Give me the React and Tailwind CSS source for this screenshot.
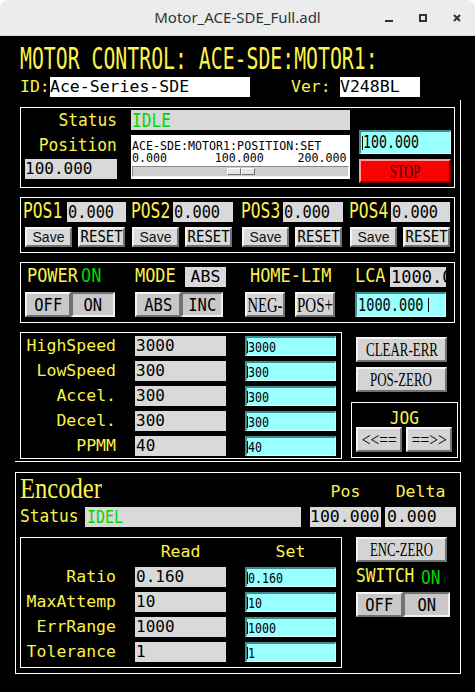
const Y = "text-[#fbf34a]";
const G = "text-[#00d800]";
const RAISED = "border-2 border-t-[#f4f4f4] border-l-[#f4f4f4] border-b-[#727272] border-r-[#727272]";
const SUNK = "border-2 border-t-[#727272] border-l-[#727272] border-b-[#f0f0f0] border-r-[#f0f0f0]";
const SERIF = "font-['Liberation_Serif',serif]";

function N({ c = "", children }) {
  return <span className={`inline-block whitespace-nowrap leading-none ${c}`}>{children}</span>;
}

function Btn({ w, h = "h-[25px]", bg = "bg-[#d4d4d4]", bevel = RAISED, className = "", children }) {
  return (
    <div className={`${w} ${h} ${bg} ${bevel} ${className} shrink-0 flex items-center justify-center overflow-hidden`}>
      {children}
    </div>
  );
}

function Rd({ w, className = "", children }) {
  return (
    <div className={`${w} h-[20px] ${className} shrink-0 bg-[#d9d9d9] flex items-center overflow-hidden`}>
      {children}
    </div>
  );
}

function Ent({ w, h = "h-[20px]", className = "", children }) {
  return (
    <div
      className={`${w} ${h} ${className} shrink-0 bg-[#99ffff] border-t-2 border-l-2 border-b border-r border-t-[#3f8c8c] border-l-[#3f8c8c] border-b-[#d2ffff] border-r-[#d2ffff] flex items-center overflow-hidden`}
    >
      {children}
    </div>
  );
}

const Caret = ({ h = "h-[12px]" }) => <span className={`w-px ${h} bg-black shrink-0`} />;

function ParamRow({ label, value }) {
  return (
    <div className="h-[20px] flex items-center">
      <div className="w-[95px] flex justify-end shrink-0">
        <N c={`text-[16.5px] ${Y}`}>{label}</N>
      </div>
      <Rd w="w-[91px]" className="ml-[19px] pl-[1px]">
        <N c="text-[16px] text-black">{value}</N>
      </Rd>
      <Ent w="w-[91px]" className="ml-[19px]">
        <Caret />
        <N c="text-[14px] scale-x-[0.83] origin-left text-black">{value}</N>
      </Ent>
    </div>
  );
}

function TitleBar() {
  return (
    <div className="h-[36px] shrink-0 bg-[#ececec] rounded-t-[8px] border-b border-[#d2d2d2] grid grid-cols-[1fr_auto_1fr] items-center font-['Noto_Sans',sans-serif]">
      <div />
      <span className="text-[15px] text-[#2e3436]">Motor_ACE-SDE_Full.adl</span>
      <div className="flex justify-end items-center gap-[26px] pr-[14px]">
        <svg width="8" height="8" viewBox="0 0 8 8">
          <rect x="0" y="6" width="8" height="2" fill="#2e3436" />
        </svg>
        <svg width="8" height="8" viewBox="0 0 8 8">
          <rect x="1" y="1" width="6" height="6" fill="none" stroke="#2e3436" strokeWidth="2" />
        </svg>
        <svg width="8" height="8" viewBox="0 0 8 8">
          <path d="M1 1 L7 7 M7 1 L1 7" stroke="#2e3436" strokeWidth="2" />
        </svg>
      </div>
    </div>
  );
}

function StatusPanel() {
  const sl = "text-[12px] scale-x-[0.97] text-black";
  return (
    <div className="mt-[7px] w-[435px] h-[81px] border border-white flex pl-[4px] shrink-0">
      <div className="w-[92px] flex flex-col shrink-0">
        <div className="h-[24px] flex items-center justify-end">
          <N c={`text-[18px] scale-x-[0.9] origin-right ${Y}`}>Status</N>
        </div>
        <div className="h-[25px] flex items-center justify-end">
          <N c={`text-[18px] scale-x-[0.9] origin-right ${Y}`}>Position</N>
        </div>
        <Rd w="w-[92px]" className="mt-[2px]">
          <N c="text-[16px] text-black">100.000</N>
        </Rd>
      </div>

      <div className="ml-[14px] w-[219px] flex flex-col shrink-0">
        <Rd w="w-[219px]" className="mt-[2px] pl-[1px]">
          <N c={`text-[19px] scale-x-[0.85] origin-left ${G}`}>IDLE</N>
        </Rd>
        <div className="mt-[5px] h-[44px] bg-white flex flex-col pt-[5px] px-[1px]">
          <div className="h-[12px] flex items-center">
            <N c={`${sl} origin-left`}>ACE-SDE:MOTOR1:POSITION:SET</N>
          </div>
          <div className="h-[12px] grid grid-cols-3 items-center pr-[2px]">
            <div className="flex justify-start">
              <N c={`${sl} origin-left`}>0.000</N>
            </div>
            <div className="flex justify-center">
              <N c={`${sl} origin-center`}>100.000</N>
            </div>
            <div className="flex justify-end">
              <N c={`${sl} origin-right`}>200.000</N>
            </div>
          </div>
          <div className="mt-[2px] h-[11px] bg-[#cfcfcf] border border-t-[#8a8a8a] border-l-[#8a8a8a] border-b-[#f2f2f2] border-r-[#f2f2f2] flex items-center justify-center">
            <div className="flex h-[7px]">
              <div className="w-[14px] bg-[#e6e6e6] border border-t-white border-l-white border-b-[#707070] border-r-[#707070]" />
              <div className="w-[14px] bg-[#e6e6e6] border border-t-white border-l-white border-b-[#707070] border-r-[#707070]" />
            </div>
          </div>
        </div>
      </div>

      <div className="ml-[9px] w-[92px] flex flex-col shrink-0">
        <Ent w="w-[92px]" h="h-[24px]" className="mt-[22px] pl-[1px]">
          <Caret h="h-[14px]" />
          <N c="text-[17px] scale-x-[0.78] origin-left text-black">100.000</N>
        </Ent>
        <Btn
          w="w-[92px]"
          h="h-[24px]"
          bg="bg-[#fd0000]"
          bevel="border-2 border-t-[#ff9a9a] border-l-[#ff9a9a] border-b-[#7a0000] border-r-[#7a0000]"
          className="mt-[5px]"
        >
          <N c={`${SERIF} text-[19px] scale-x-[0.65] text-[#3a0000]`}>STOP</N>
        </Btn>
      </div>
    </div>
  );
}

function PosPanel() {
  const lab = `text-[22px] scale-x-[0.74] origin-left ${Y}`;
  const val = "text-[17px] scale-x-[0.9] origin-left text-black";
  const save = "font-['Liberation_Sans',sans-serif] text-[14px] text-[#111]";
  const reset = "text-[15px] scale-x-[0.93] text-black";
  return (
    <div className="mt-[9px] w-[435px] h-[56px] border border-white flex flex-col shrink-0">
      <div className="mt-[4px] h-[20px] flex items-center">
        <div className="ml-[2px] w-[40px] shrink-0"><N c={lab}>POS1</N></div>
        <Rd w="w-[59px]" className="ml-[4px] pl-[1px]"><N c={val}>0.000</N></Rd>
        <div className="ml-[5px] w-[41px] shrink-0"><N c={lab}>POS2</N></div>
        <Rd w="w-[60px]" className="ml-[1px] pl-[1px]"><N c={val}>0.000</N></Rd>
        <div className="ml-[8px] w-[41px] shrink-0"><N c={lab}>POS3</N></div>
        <Rd w="w-[60px]" className="ml-[1px] pl-[1px]"><N c={val}>0.000</N></Rd>
        <div className="ml-[6px] w-[41px] shrink-0"><N c={lab}>POS4</N></div>
        <Rd w="w-[59px]" className="ml-[1px] pl-[1px]"><N c={val}>0.000</N></Rd>
      </div>
      <div className="mt-[5px] h-[20px] flex items-center">
        <Btn w="w-[47px]" h="h-[20px]" bg="bg-[#dadada]" className="ml-[4px]"><N c={save}>Save</N></Btn>
        <Btn w="w-[47px]" h="h-[20px]" bg="bg-[#dadada]" className="ml-[6px]"><N c={reset}>RESET</N></Btn>
        <Btn w="w-[47px]" h="h-[20px]" bg="bg-[#dadada]" className="ml-[7px]"><N c={save}>Save</N></Btn>
        <Btn w="w-[47px]" h="h-[20px]" bg="bg-[#dadada]" className="ml-[6px]"><N c={reset}>RESET</N></Btn>
        <Btn w="w-[47px]" h="h-[20px]" bg="bg-[#dadada]" className="ml-[10px]"><N c={save}>Save</N></Btn>
        <Btn w="w-[47px]" h="h-[20px]" bg="bg-[#dadada]" className="ml-[6px]"><N c={reset}>RESET</N></Btn>
        <Btn w="w-[47px]" h="h-[20px]" bg="bg-[#dadada]" className="ml-[8px]"><N c={save}>Save</N></Btn>
        <Btn w="w-[47px]" h="h-[20px]" bg="bg-[#dadada]" className="ml-[6px]"><N c={reset}>RESET</N></Btn>
      </div>
    </div>
  );
}

function PowerPanel() {
  const lab = `text-[19px] scale-x-[0.89] origin-left`;
  const ch = "text-[18px] scale-x-[0.86] text-black";
  return (
    <div className="mt-[9px] w-[435px] h-[61px] border border-white flex flex-col shrink-0">
      <div className="mt-[4px] h-[20px] flex items-center">
        <div className="ml-[6px] w-[54px] shrink-0"><N c={`${lab} ${Y}`}>POWER</N></div>
        <div className="w-[24px] shrink-0"><N c={`${lab} ${G}`}>ON</N></div>
        <div className="ml-[30px] w-[50px] shrink-0"><N c={`${lab} ${Y}`}>MODE</N></div>
        <Rd w="w-[41px]" className="justify-center"><N c="text-[16.5px] text-black">ABS</N></Rd>
        <div className="ml-[24px] w-[105px] shrink-0"><N c={`${lab} ${Y}`}>HOME-LIM</N></div>
        <div className="w-[35px] shrink-0"><N c={`${lab} ${Y}`}>LCA</N></div>
        <Rd w="w-[56px]" className="pl-[1px]"><N c="text-[17px] text-black">1000.000</N></Rd>
      </div>
      <div className="mt-[5px] h-[25px] flex items-center">
        <Btn w="w-[46px]" bg="bg-[#c8c8c8]" className="ml-[4px]"><N c={ch}>OFF</N></Btn>
        <Btn w="w-[44px]" bg="bg-[#c8c8c8]" bevel={SUNK}><N c={ch}>ON</N></Btn>
        <Btn w="w-[46px]" bg="bg-[#c8c8c8]" className="ml-[20px]"><N c={ch}>ABS</N></Btn>
        <Btn w="w-[42px]" bg="bg-[#c8c8c8]" bevel={SUNK}><N c={ch}>INC</N></Btn>
        <Btn w="w-[40px]" className="ml-[22px]"><N c={`${SERIF} text-[20px] scale-x-[0.73] text-black`}>NEG-</N></Btn>
        <Btn w="w-[40px]" className="ml-[10px]"><N c={`${SERIF} text-[20px] scale-x-[0.75] text-black`}>POS+</N></Btn>
        <Ent w="w-[91px]" h="h-[25px]" className="ml-[20px] pl-[1px]">
          <N c="text-[17px] scale-x-[0.8] origin-left text-black">1000.000</N>
          <span className="-ml-[12px] w-px h-[14px] bg-black shrink-0" />
        </Ent>
      </div>
    </div>
  );
}

function SpeedsRow() {
  const speeds = [
    ["HighSpeed", "3000"],
    ["LowSpeed", "300"],
    ["Accel.", "300"],
    ["Decel.", "300"],
    ["PPMM", "40"],
  ];
  const cmd = `${SERIF} text-[18px] scale-x-[0.72] text-black`;
  return (
    <div className="mt-[9px] flex shrink-0">
      <div className="w-[322px] h-[127px] border border-white flex flex-col gap-[5px] pt-[3px] shrink-0">
        {speeds.map(([l, v]) => (
          <ParamRow key={l} label={l} value={v} />
        ))}
      </div>
      <div className="ml-[9px] w-[107px] flex flex-col shrink-0">
        <Btn w="w-[91px]" className="ml-[5px] mt-[5px]"><N c={cmd}>CLEAR-ERR</N></Btn>
        <Btn w="w-[91px]" className="ml-[5px] mt-[5px]"><N c={cmd}>POS-ZERO</N></Btn>
        <div className="mt-[10px] h-[56px] border border-white flex flex-col">
          <div className="mt-[5px] h-[19px] flex items-center justify-center">
            <N c={`text-[18px] scale-x-[0.9] ${Y}`}>JOG</N>
          </div>
          <div className="ml-[4px] h-[25px] flex gap-[4px]">
            <Btn w="w-[46px]"><N c={`${SERIF} text-[18px] scale-x-[0.86] text-black`}>{"<<=="}</N></Btn>
            <Btn w="w-[46px]"><N c={`${SERIF} text-[18px] scale-x-[0.86] text-black`}>{"==>>"}</N></Btn>
          </div>
        </div>
      </div>
    </div>
  );
}

function EncoderPanel() {
  const enc = [
    ["Ratio", "0.160"],
    ["MaxAttemp", "10"],
    ["ErrRange", "1000"],
    ["Tolerance", "1"],
  ];
  const ch = "text-[18px] scale-x-[0.86] text-black";
  return (
    <div className="ml-[15px] mt-[10px] w-[446px] h-[202px] border border-white flex flex-col shrink-0">
      <div className="h-[30px] flex">
        <div className="ml-[4px] w-[290px] flex items-center shrink-0">
          <N c={`${SERIF} text-[30px] scale-x-[0.82] origin-left ${Y}`}>Encoder</N>
        </div>
        <div className="mt-[9px] w-[71px] h-[20px] flex items-center justify-center shrink-0">
          <N c={`text-[16.5px] ${Y}`}>Pos</N>
        </div>
        <div className="ml-[4px] mt-[9px] w-[71px] h-[20px] flex items-center justify-center shrink-0">
          <N c={`text-[16.5px] ${Y}`}>Delta</N>
        </div>
      </div>
      <div className="mt-[4px] h-[20px] flex items-center">
        <div className="ml-[4px] w-[60px] shrink-0">
          <N c={`text-[18px] scale-x-[0.9] origin-left ${Y}`}>Status</N>
        </div>
        <Rd w="w-[216px]" className="ml-[5px] pl-[2px]">
          <N c={`text-[18px] scale-x-[0.83] origin-left ${G}`}>IDEL</N>
        </Rd>
        <Rd w="w-[71px]" className="ml-[9px]"><N c="text-[16.5px] text-black">100.000</N></Rd>
        <Rd w="w-[71px]" className="ml-[4px] pl-[2px]"><N c="text-[16.5px] text-black">0.000</N></Rd>
      </div>
      <div className="mt-[10px] flex">
        <div className="ml-[4px] w-[322px] h-[131px] border border-white flex flex-col pt-[4px] shrink-0">
          <div className="h-[20px] flex items-center">
            <div className="w-[95px] shrink-0" />
            <div className="ml-[19px] w-[91px] flex justify-center shrink-0"><N c={`text-[16.5px] ${Y}`}>Read</N></div>
            <div className="ml-[19px] w-[91px] flex justify-center shrink-0"><N c={`text-[16.5px] ${Y}`}>Set</N></div>
          </div>
          <div className="mt-[5px] flex flex-col gap-[5px]">
            {enc.map(([l, v]) => (
              <ParamRow key={l} label={l} value={v} />
            ))}
          </div>
        </div>
        <div className="ml-[14px] flex flex-col shrink-0">
          <Btn w="w-[91px]"><N c={`${SERIF} text-[18px] scale-x-[0.71] text-black`}>ENC-ZERO</N></Btn>
          <div className="mt-[5px] h-[20px] flex items-center">
            <div className="w-[65px] shrink-0"><N c={`text-[19px] scale-x-[0.85] origin-left ${Y}`}>SWITCH</N></div>
            <N c={`text-[19px] scale-x-[0.85] origin-left ${G}`}>ON</N>
          </div>
          <div className="mt-[5px] flex">
            <Btn w="w-[47px]" bg="bg-[#c8c8c8]"><N c={ch}>OFF</N></Btn>
            <Btn w="w-[47px]" bg="bg-[#c8c8c8]" bevel={SUNK}><N c={ch}>ON</N></Btn>
          </div>
        </div>
      </div>
    </div>
  );
}

export default function App() {
  return (
    <div className="w-[475px] h-[692px] overflow-hidden bg-white flex flex-col font-['DejaVu_Sans_Mono',monospace]">
      <TitleBar />
      <div className="flex-1 bg-black flex flex-col">
        <div className="h-[30px] mt-[8px] pl-[20px] flex items-center shrink-0">
          <N c={`text-[30px] scale-x-[0.66] origin-left ${Y}`}>MOTOR CONTROL: ACE-SDE:MOTOR1:</N>
        </div>
        <div className="mt-[3px] h-[20px] flex items-center shrink-0">
          <div className="ml-[20px] w-[30px] shrink-0"><N c={`text-[16.5px] ${Y}`}>ID:</N></div>
          <div className="w-[200px] h-[20px] bg-white flex items-center shrink-0">
            <N c="text-[16.5px] text-black">Ace-Series-SDE</N>
          </div>
          <div className="ml-[41px] w-[49px] shrink-0"><N c={`text-[16.5px] ${Y}`}>Ver:</N></div>
          <div className="w-[80px] h-[20px] bg-white flex items-center shrink-0">
            <N c="text-[16.5px] text-black">V248BL</N>
          </div>
        </div>
        <div className="ml-[15px] mt-[3px] w-[446px] h-[362px] border-r border-b border-white pl-[5px] flex flex-col shrink-0">
          <StatusPanel />
          <PosPanel />
          <PowerPanel />
          <SpeedsRow />
        </div>
        <EncoderPanel />
      </div>
    </div>
  );
}
